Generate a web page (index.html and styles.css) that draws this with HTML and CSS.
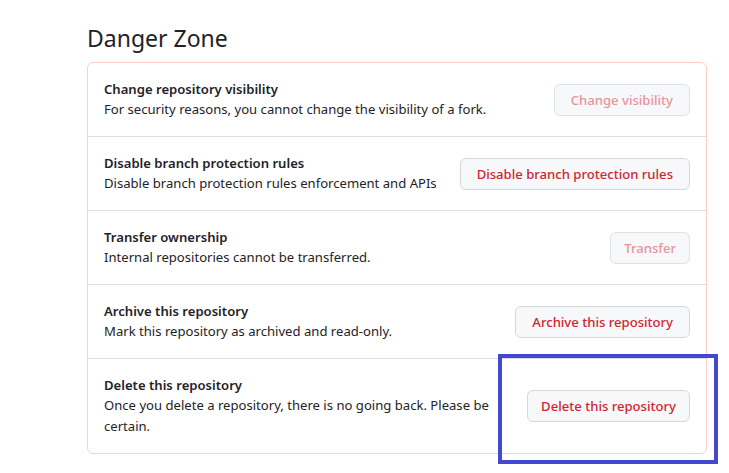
FILE: index.html
```html
<!DOCTYPE html>
<html lang="en">
<head>
<meta charset="utf-8">
<title>Danger Zone</title>
<link rel="stylesheet" href="styles.css">
</head>
<body>
<main class="page">
  <h2 class="heading">Danger Zone</h2>
  <div class="zone">
    <div class="row">
      <div class="info">
        <strong class="title">Change repository visibility</strong>
        <p class="desc">For security reasons, you cannot change the visibility of a fork.</p>
      </div>
      <button class="btn is-disabled" type="button">Change visibility</button>
    </div>
    <div class="row">
      <div class="info">
        <strong class="title">Disable branch protection rules</strong>
        <p class="desc">Disable branch protection rules enforcement and APIs</p>
      </div>
      <button class="btn" type="button">Disable branch protection rules</button>
    </div>
    <div class="row">
      <div class="info">
        <strong class="title">Transfer ownership</strong>
        <p class="desc">Internal repositories cannot be transferred.</p>
      </div>
      <button class="btn is-disabled btn-narrow" type="button">Transfer</button>
    </div>
    <div class="row">
      <div class="info">
        <strong class="title">Archive this repository</strong>
        <p class="desc">Mark this repository as archived and read-only.</p>
      </div>
      <button class="btn" type="button">Archive this repository</button>
    </div>
    <div class="row row-last">
      <div class="info info-narrow">
        <strong class="title">Delete this repository</strong>
        <p class="desc">Once you delete a repository, there is no going back. Please be certain.</p>
      </div>
      <button class="btn btn-narrow" type="button">Delete this repository</button>
      <div class="highlight"></div>
    </div>
  </div>
</main>
</body>
</html>
```

FILE: styles.css
```css
* { box-sizing: border-box; }
html, body { margin: 0; padding: 0; background: #ffffff; }
body {
  font-family: "Noto Sans", "Open Sans", sans-serif;
  font-size: 13.1px;
  color: #1f2328;
  min-height: 473px;
}
.page {
  width: 620px;
  margin-left: 87px;
  padding-top: 20px;
  padding-bottom: 19px;
}
.heading {
  margin: 0 0 6px 0;
  font-size: 23px;
  font-weight: 400;
  line-height: 36px;
  color: #1f2328;
}
.zone {
  border: 1px solid #ffcecb;
  border-radius: 6px;
}
.row {
  position: relative;
  display: flex;
  align-items: center;
  padding: 16px;
  border-top: 1px solid #d8dee4;
}
.row:first-child { border-top: 0; }
.info { flex: 1 1 auto; min-width: 0; }
.info-narrow { flex: 0 1 392px; margin-right: auto; }
.title {
  display: block;
  font-weight: 600;
  line-height: 20px;
}
.desc {
  margin: 0;
  line-height: 21px;
}
.btn {
  flex: none;
  margin-left: 16px;
  height: 32px;
  padding: 0 16px;
  font-family: inherit;
  font-size: 13.1px;
  font-weight: 500;
  color: #d1242f;
  background: #f6f8fa;
  border: 1px solid #d1d9e0;
  border-radius: 6px;
  cursor: pointer;
}
.btn-narrow { padding: 0 13px; }
.btn.is-disabled {
  color: #e8939a;
  border-color: #dde2e7;
}
.highlight {
  position: absolute;
  left: 410px;
  top: -5px;
  width: 220px;
  height: 110px;
  border: 4px solid #4349cf;
}
```
